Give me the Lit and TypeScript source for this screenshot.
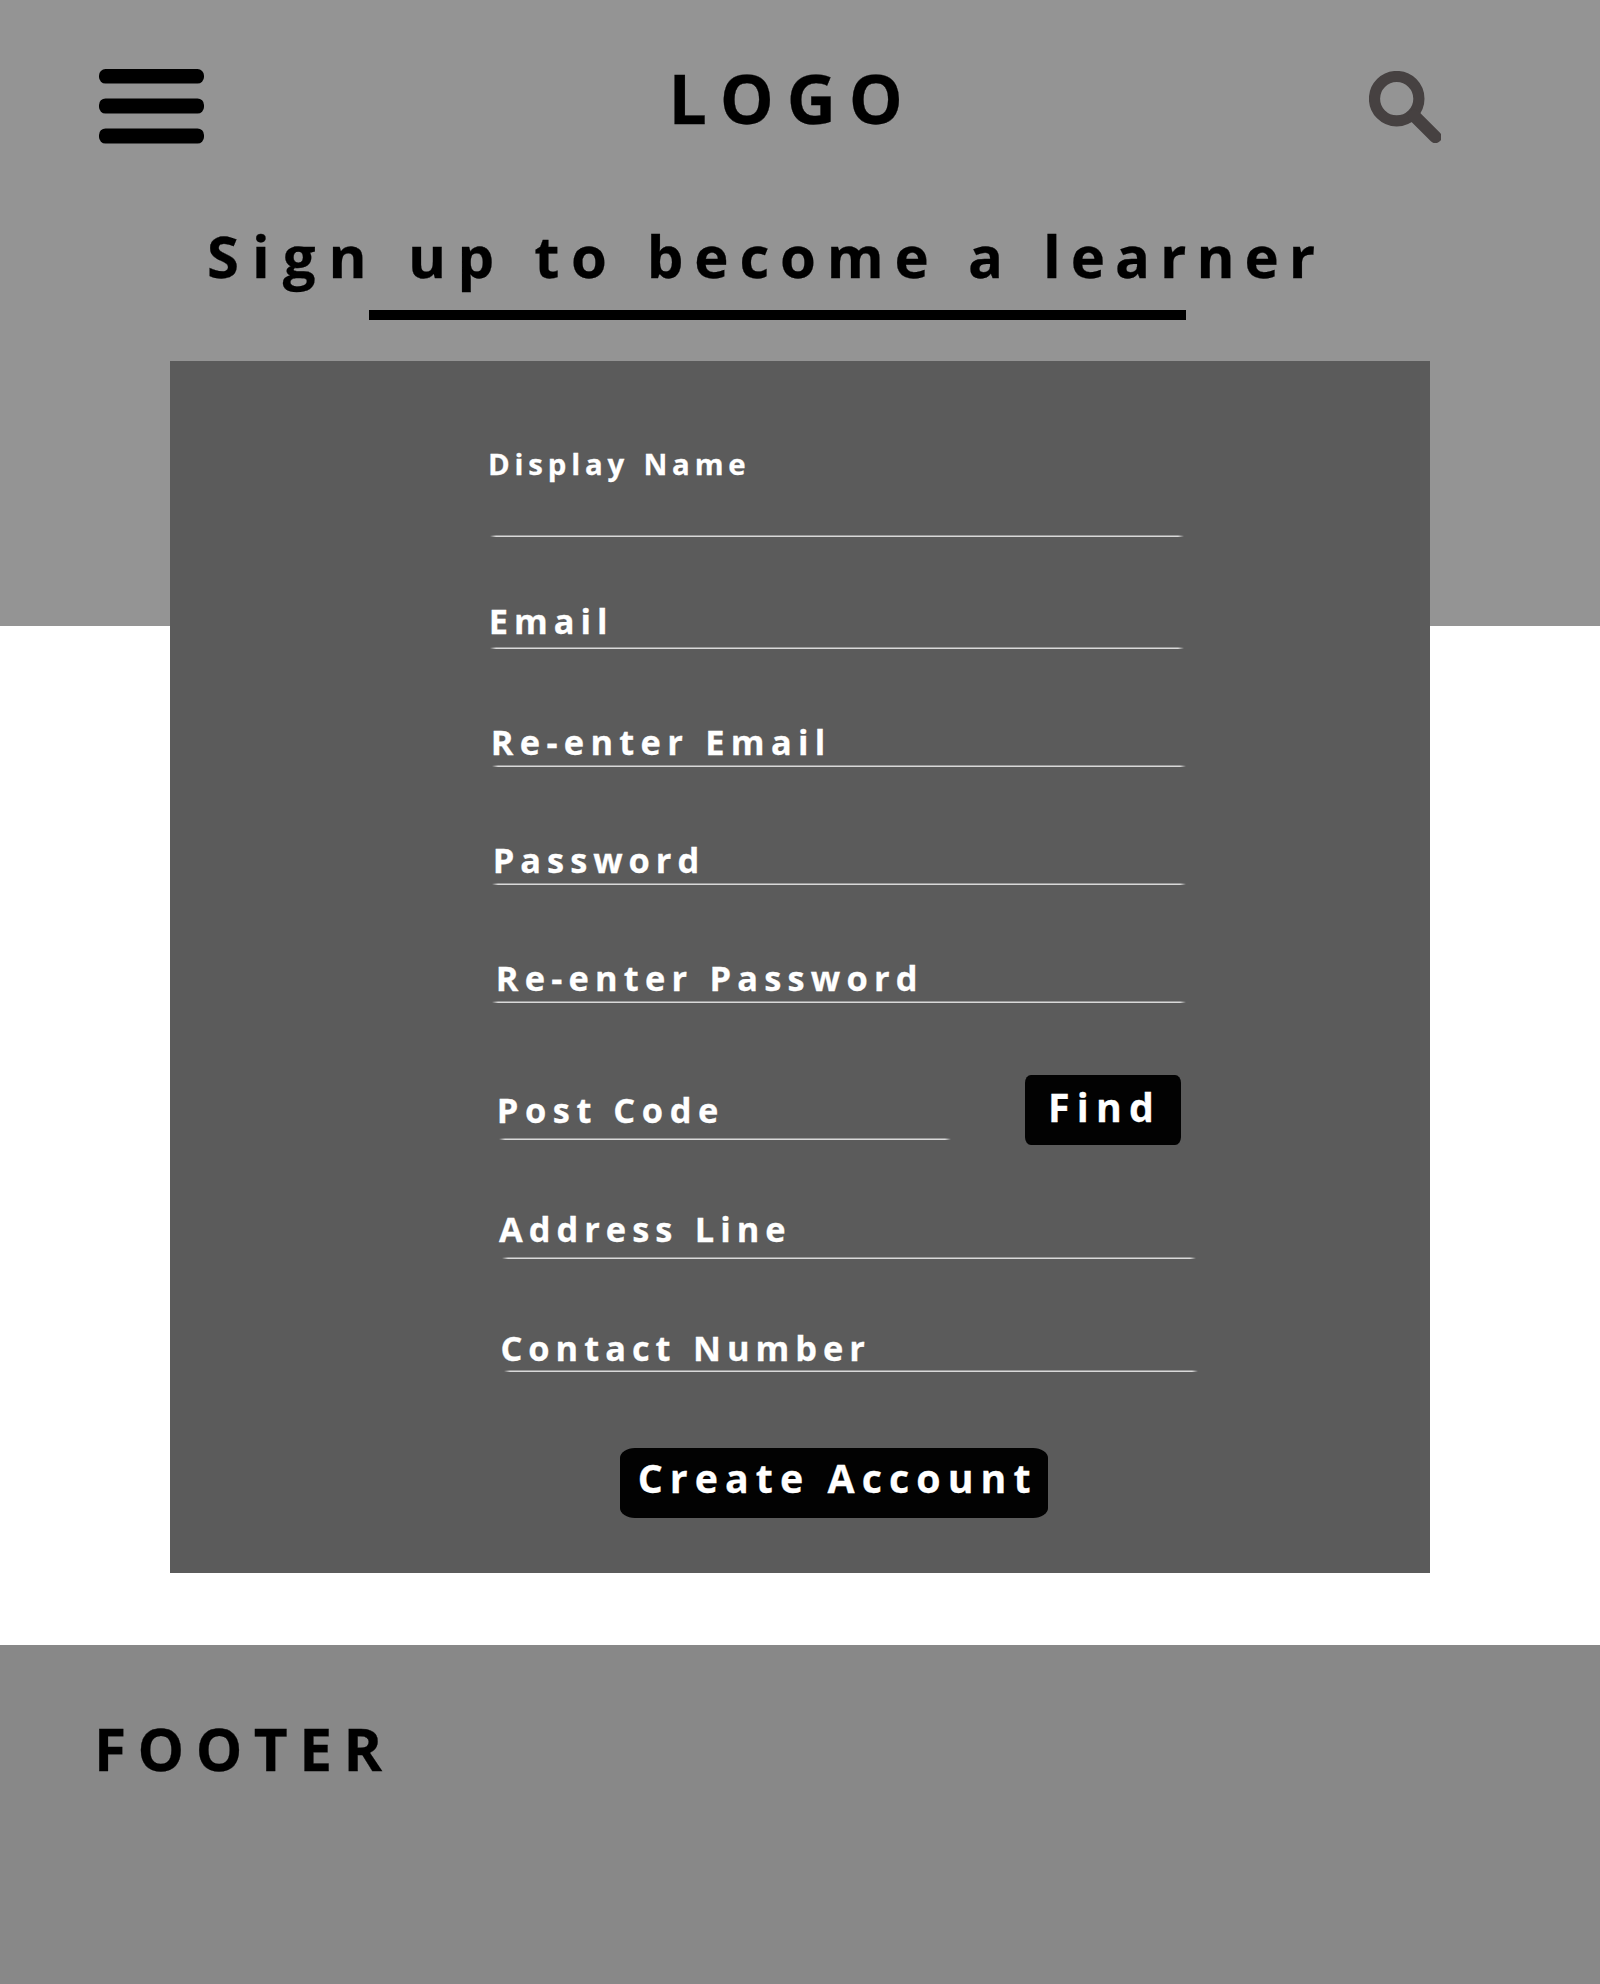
import { LitElement, html, css } from "lit";
import { customElement, property } from "lit/decorators.js";

@customElement("form-field")
class FormField extends LitElement {
  @property() label = "";

  static styles = css`
    :host {
      display: block;
    }
    .label {
      display: block;
      white-space: nowrap;
      font-size: var(--label-size, 34.4px);
      line-height: var(--label-line, 47px);
      letter-spacing: var(--label-spacing, 6px);
      word-spacing: var(--label-word, 0px);
      padding-left: var(--label-indent, 0px);
    }
    .rule {
      height: 2px;
      width: var(--rule-width, 694px);
      margin-top: var(--rule-gap, 0px);
      margin-left: var(--rule-indent, 0px);
      background: linear-gradient(#9c9c9c 50%, #d9d9d9 50%);
      mask-image: linear-gradient(90deg, transparent, #000 6px, #000 calc(100% - 6px), transparent);
    }
  `;

  render() {
    return html`
      <label class="label">${this.label}</label>
      <div class="rule"></div>
    `;
  }
}

@customElement("app-root")
class AppRoot extends LitElement {
  static styles = css`
    :host {
      display: block;
      width: 1600px;
      height: 1984px;
      background: #fff;
      color: #000;
      font-family: "Open Sans", "Noto Sans", sans-serif;
      font-weight: 700;
      -webkit-text-stroke: 0.016em;
    }
    .page {
      display: flex;
      flex-direction: column;
      height: 1984px;
      overflow: hidden;
    }
    .header {
      box-sizing: border-box;
      flex: none;
      height: 626px;
      padding-top: 51px;
      background: #949494;
    }
    .bar {
      display: flex;
      align-items: flex-start;
      justify-content: space-between;
      height: 164px;
      padding: 0 159px 0 99px;
    }
    .menu {
      display: block;
      margin-top: 18px;
    }
    .search {
      display: block;
      margin-top: 20px;
    }
    .logo {
      width: 240px;
      margin-left: 28px;
      margin-right: 24px;
      font-size: 68px;
      line-height: 93px;
      letter-spacing: 12.8px;
      white-space: nowrap;
    }
    .title {
      margin: 0 0 0 207px;
      font-size: 58px;
      line-height: 81px;
      letter-spacing: 11.5px;
      word-spacing: 1.9px;
      white-space: nowrap;
    }
    .wide {
      letter-spacing: 13px;
    }
    .mid {
      letter-spacing: 10.8px;
    }
    .tight {
      letter-spacing: 10px;
    }
    .underline {
      width: 817px;
      height: 10px;
      margin: 14px 0 0 369px;
      background: #000;
    }
    .card {
      box-sizing: border-box;
      flex: none;
      width: 1260px;
      height: 1212px;
      margin: -265px auto 0;
      padding: 83px 0 0 317px;
      background: #5b5b5b;
      color: #fff;
    }
    .display-name {
      --label-size: 29.4px;
      --label-line: 40px;
      --label-spacing: 4.8px;
      --label-word: 2px;
      --label-indent: 1px;
      --rule-gap: 51px;
      --rule-indent: 3px;
    }
    .email {
      margin-top: 60px;
      --label-spacing: 5.96px;
      --label-indent: 1.8px;
      --rule-gap: 3px;
      --rule-indent: 3px;
    }
    .email-again {
      margin-top: 69px;
      --label-spacing: 6.3px;
      --label-word: 1px;
      --label-indent: 3.8px;
      --rule-indent: 5px;
    }
    .password {
      margin-top: 69px;
      --label-spacing: 5.96px;
      --label-indent: 5.8px;
      --rule-indent: 5px;
    }
    .password-again {
      margin-top: 69px;
      --label-spacing: 6.2px;
      --label-word: 1px;
      --label-indent: 8.8px;
      --rule-indent: 5px;
    }
    .lookup {
      display: flex;
      align-items: flex-start;
      height: 70px;
      margin-top: 72px;
    }
    .post-code {
      width: 538px;
      padding-top: 11px;
      --label-spacing: 6.54px;
      --label-indent: 9.8px;
      --rule-gap: 5px;
      --rule-indent: 11.5px;
      --rule-width: 452px;
    }
    .address {
      margin-top: 60px;
      --label-spacing: 6px;
      --label-word: 1.5px;
      --label-indent: 12px;
      --rule-gap: 5px;
      --rule-indent: 15px;
    }
    .contact {
      margin-top: 65px;
      --label-spacing: 6px;
      --label-word: 1.5px;
      --label-indent: 13.4px;
      --rule-gap: -1px;
      --rule-indent: 17px;
    }
    .button {
      display: block;
      box-sizing: border-box;
      height: 70px;
      margin: 0;
      border: 0;
      background: #020202;
      color: #fff;
      font: inherit;
      font-size: 39.3px;
      line-height: 54px;
      text-align: left;
      white-space: nowrap;
    }
    .find {
      width: 156px;
      padding: 5px 0 11px 23.1px;
      border-radius: 6px / 8px;
      letter-spacing: 7.2px;
    }
    .create {
      width: 428px;
      margin: 76px 0 0 133px;
      padding: 3px 0 13px 17.7px;
      border-radius: 15px / 10px;
      letter-spacing: 7.07px;
    }
    .footer {
      flex: 1;
      margin-top: 72px;
      padding: 63px 0 0 94px;
      background: #888;
      font-size: 58.6px;
      line-height: 80px;
      letter-spacing: 11.45px;
    }
  `;

  render() {
    return html`
      <div class="page">
        <header class="header">
          <div class="bar">
            <svg class="menu" width="105" height="75" viewBox="0 0 105 75">
              <rect x="0" y="0" width="105" height="14.6" rx="6.5" />
              <rect x="0" y="29.4" width="105" height="15.2" rx="6.5" />
              <rect x="0" y="59.4" width="105" height="15.2" rx="6.5" />
            </svg>
            <div class="logo">LOGO</div>
            <svg class="search" width="72" height="72" viewBox="0 0 72 72" fill="none" stroke="#464141">
              <circle cx="27.7" cy="27.7" r="22.2" stroke-width="11.2" />
              <path d="M45 44.6L66.3 65.9" stroke-width="12.6" stroke-linecap="round" />
            </svg>
          </div>
          <h1 class="title"><span class="wide">Sign</span> up to <span class="mid">become</span> a <span class="tight">learner</span></h1>
          <div class="underline"></div>
        </header>

        <main class="card">
          <form-field class="display-name" label="Display Name"></form-field>
          <form-field class="email" label="Email"></form-field>
          <form-field class="email-again" label="Re-enter Email"></form-field>
          <form-field class="password" label="Password"></form-field>
          <form-field class="password-again" label="Re-enter Password"></form-field>
          <div class="lookup">
            <form-field class="post-code" label="Post Code"></form-field>
            <button class="button find">Find</button>
          </div>
          <form-field class="address" label="Address Line"></form-field>
          <form-field class="contact" label="Contact Number"></form-field>
          <button class="button create">Create Account</button>
        </main>

        <footer class="footer">FOOTER</footer>
      </div>
    `;
  }
}
